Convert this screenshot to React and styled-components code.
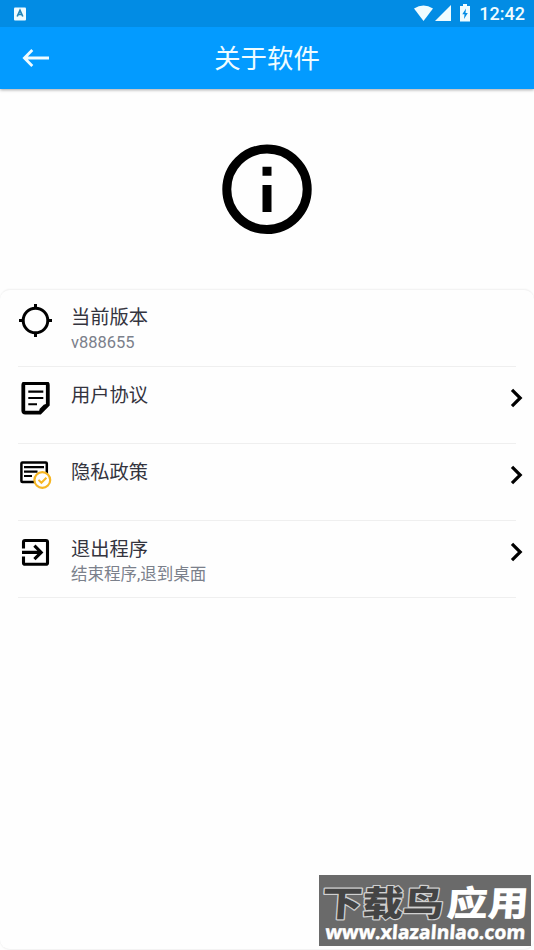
import React from "react";
import styled, { createGlobalStyle } from "styled-components";

const GlobalStyle = createGlobalStyle`
    * {
        box-sizing: border-box;
    }
    body {
        margin: 0;
        background-color: #fefefe;
        font-family: Roboto, "Noto Sans CJK SC", sans-serif;
    }
    h1, h2, p {
        margin: 0;
        font-weight: 400;
    }
    svg {
        display: block;
        flex-shrink: 0;
    }
`

const Page = styled.div`
    position: relative;
    display: flex;
    flex-direction: column;
    height: 950px;
    overflow: hidden;
`

/* --------------------------------STATUS BAR AND HEADER-------------------------------------- */

const StatusBar = styled.div`
    display: flex;
    justify-content: space-between;
    align-items: center;
    height: 27px;
    padding: 0 9px 0 14px;
    background-color: #028ce4;
`

const StatusIcons = styled.div`
    display: flex;
    align-items: center;
`

const Clock = styled.span`
    margin-left: 8px;
    font-size: 18px;
    line-height: 27px;
    font-weight: 500;
    color: #effcff;
`

const Header = styled.header`
    display: grid;
    grid-template-columns: 72px 1fr 72px;
    align-items: center;
    height: 62px;
    background-color: #039bff;
    box-shadow: 0 1px 3px rgba(0, 0, 0, 0.35);
    clip-path: inset(0 0 -8px 0);
`

const BackButton = styled.button`
    width: 72px;
    height: 62px;
    padding: 0 0 0 22px;
    border: 0;
    background: none;
`

const Title = styled.h1`
    padding-top: 2px;
    font-size: 26.4px;
    line-height: 60px;
    text-align: center;
    color: #effcff;
`

/* --------------------------------CONTENT-------------------------------------- */

const Hero = styled.div`
    display: flex;
    justify-content: center;
    align-items: center;
    height: 200px;
`

const Card = styled.main`
    flex: 1;
    padding: 0 18px;
    border: 1px solid #f3f3f3;
    border-width: 1px 0;
    border-radius: 10px;
    background-color: #fefefe;
    box-shadow: 0 0 2px rgba(0, 0, 0, 0.06);
`

const Row = styled.div`
    display: flex;
    height: 77px;
    padding-top: ${(props) => (props.$first ? 14 : 15)}px;
    border-bottom: 1px solid #efefef;
`

const RowIcon = styled.div`
    width: 34px;
    height: 34px;
    margin-right: 19px;
`

const RowText = styled.div`
    flex: 1;
`

const RowTitle = styled.h2`
    font-size: 19.3px;
    line-height: 27px;
    color: #34343e;
`

const RowSub = styled.p`
    font-size: 16.5px;
    line-height: 23px;
    color: #7b808b;
`

const Arrow = styled.svg`
    width: 14px;
    height: 20px;
    margin: 6px -7px 0 0;
`

/* --------------------------------WATERMARK-------------------------------------- */

const Watermark = styled.div`
    position: absolute;
    right: 3px;
    bottom: 4px;
    width: 212px;
    height: 71px;
    background-color: #6a6a6a;
`

/* --------------------------------ICONS-------------------------------------- */

function InfoIcon() {
    return (
        <svg width="90" height="90" viewBox="0 0 90 90">
            <circle cx="45" cy="45.3" r="40.2" fill="none" stroke="#000" strokeWidth="9" />
            <path d="M40.5 22.8h9v9h-9zM40.5 41h9v27h-9z" />
        </svg>
    )
}

function TargetIcon() {
    return (
        <svg width="34" height="34" viewBox="0 0 34 34" fill="none" stroke="#000" strokeWidth="3">
            <circle cx="17.5" cy="16.5" r="12.3" />
            <path d="M17.5 0v5M17.5 28v5M1 16.5h5M29 16.5h5" />
        </svg>
    )
}

function AgreementIcon() {
    return (
        <svg width="34" height="34" viewBox="0 1 34 34" fill="none" stroke="#000">
            <path d="M7.2 2.1h20.7q1.9 0 1.9 1.9v19.7L22 31.7H7.2q-1.9 0-1.9-1.9V4q0-1.9 1.9-1.9z" strokeWidth="3.8" />
            <path d="M21.5 32v-4l4.5-4.5h4.5z" fill="#000" stroke="none" />
            <path d="M10.3 10.6h15M10.3 17h15M10.3 23.3h8.7" strokeWidth="2.1" />
        </svg>
    )
}

function PrivacyIcon() {
    return (
        <svg width="34" height="34" viewBox="0 1 34 34" fill="none" stroke="#000">
            <rect x="3.4" y="4.5" width="25.4" height="19.6" rx="1" strokeWidth="2.5" />
            <path d="M6 9.2h20M6 13.6h13.5M6 18h8" strokeWidth="2.2" />
            <circle cx="24.3" cy="22" r="7.9" fill="#fefefe" stroke="#f6b623" strokeWidth="2.2" />
            <path d="M20.5 21.9l2.9 2.9 5-5" stroke="#f6b623" strokeWidth="2" />
        </svg>
    )
}

function ExitIcon() {
    return (
        <svg width="34" height="34" viewBox="0 1 34 34" fill="none" stroke="#000" strokeWidth="3.1">
            <path d="M5.5 13.4V7.1q0-1.6 1.6-1.6h20.8q1.6 0 1.6 1.6v20.6q0 1.6-1.6 1.6H7.1q-1.6 0-1.6-1.6v-6.3" />
            <path d="M4 17.4h18.6M16.4 10.6l6.8 6.8-6.8 6.8" />
        </svg>
    )
}

/* ------------------------------------------------------------------------------------ */

const rows = [
    { title: "当前版本", sub: "v888655", icon: <TargetIcon /> },
    { title: "用户协议", icon: <AgreementIcon />, link: true },
    { title: "隐私政策", icon: <PrivacyIcon />, link: true },
    { title: "退出程序", sub: "结束程序,退到桌面", icon: <ExitIcon />, link: true },
]

function App() {
    return (
        <Page>
            <GlobalStyle />
            <StatusBar>
                <svg width="12" height="14" viewBox="0 0 12 14">
                    <rect y="0.5" width="12" height="13" rx="1" fill="#effcff" />
                    <path d="M3.2 9.5L6 3.3l2.8 6.2M4.3 7.5h3.4" fill="none" stroke="#2386b8" strokeWidth="1.7" />
                </svg>
                <StatusIcons>
                    <svg width="57" height="19" viewBox="0 0 57 19" fill="#effcff">
                        <path d="M0 4.6Q9.5-1.8 19 4.6L9.5 17z" />
                        <path d="M21 17L37 1v16z" />
                        <path d="M46 2h3V0h4v2h3v15.5H46z" />
                        <path d="M52 4.5l-3.7 5.7h2.2L50 15l3.8-6h-2.3z" fill="#028ce4" />
                    </svg>
                    <Clock>12:42</Clock>
                </StatusIcons>
            </StatusBar>
            <Header>
                <BackButton aria-label="返回">
                    <svg width="28" height="20" viewBox="0 0 28 20" fill="none" stroke="#effcff" strokeWidth="2.8">
                        <path d="M2.4 10H27M10.3 2L2.4 10l7.9 8" />
                    </svg>
                </BackButton>
                <Title>关于软件</Title>
            </Header>
            <Hero>
                <InfoIcon />
            </Hero>
            <Card>
                {rows.map((row, index) => (
                    <Row key={row.title} $first={index === 0}>
                        <RowIcon>{row.icon}</RowIcon>
                        <RowText>
                            <RowTitle>{row.title}</RowTitle>
                            {row.sub && <RowSub>{row.sub}</RowSub>}
                        </RowText>
                        {row.link && (
                            <Arrow viewBox="0 0 14 20" fill="none" stroke="#000" strokeWidth="3.2">
                                <path d="M3 1.8l8.2 8.2L3 18.2" />
                            </Arrow>
                        )}
                    </Row>
                ))}
            </Card>
            <Watermark>
                <svg width="212" height="71" viewBox="0 0 212 71" overflow="visible" fontFamily='"Noto Sans CJK SC", sans-serif' fontWeight="900">
                    <g transform="translate(2 41) skewX(-4)" fontSize="35">
                        <text textLength="122" lengthAdjust="spacingAndGlyphs" fill="#444" stroke="#d0d0d0" strokeWidth="2.4" strokeLinejoin="round" paintOrder="stroke">下载鸟</text>
                        <text x="125" textLength="82" lengthAdjust="spacingAndGlyphs" fill="#fff">应用</text>
                    </g>
                    <g transform="translate(6 64) skewX(-4)">
                        <text textLength="200" lengthAdjust="spacingAndGlyphs" fontFamily='"Open Sans", sans-serif' fontSize="19" fontWeight="700" fill="#fff" stroke="#fff" strokeWidth="0.5">www.xlazalnlao.com</text>
                    </g>
                </svg>
            </Watermark>
        </Page>
    )
}

export default App
